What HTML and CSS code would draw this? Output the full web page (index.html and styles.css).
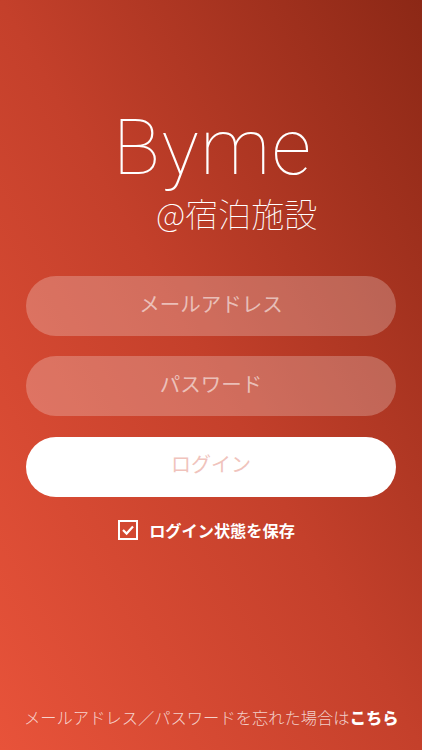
FILE: index.html
```html
<!DOCTYPE html>
<html lang="ja">
<head>
  <meta charset="UTF-8" />
  <meta name="viewport" content="width=device-width, initial-scale=1.0"/>
  <title>Byme ログイン</title>
  <link rel="stylesheet" href="styles.css">
</head>
<body>
  <div class="screen">
    <div class="logo">
      <div class="logo-name">Byme</div>
      <div class="logo-sub">@宿泊施設</div>
    </div>

    <form class="login-form">
      <input class="field" type="text" placeholder="メールアドレス" />
      <input class="field" type="password" placeholder="パスワード" />
      <button class="login-btn" type="button">ログイン</button>
      <label class="remember">
        <svg class="check" width="20" height="20" viewBox="0 0 20 20">
          <rect x="1" y="1" width="18" height="18" fill="none" stroke="#fff" stroke-width="2"/>
          <path d="M5 10 L8.6 13.6 L15 6.4" fill="none" stroke="#fff" stroke-width="2.2"/>
        </svg>
        <span>ログイン状態を保存</span>
      </label>
    </form>

    <div class="forgot">メールアドレス／パスワードを忘れた場合は<b>こちら</b></div>
  </div>
</body>
</html>
```

FILE: styles.css
```css
* {
  box-sizing: border-box;
}
html, body {
  margin: 0;
  height: 100%;
}
body {
  font-family: "Noto Sans CJK JP", "Noto Sans", sans-serif;
  color: white;
}
.screen {
  display: flex;
  flex-direction: column;
  height: 750px;
  padding: 0 26px;
  background: linear-gradient(to top right, #e8533a 0%, #c4402b 50%, #8c2816 100%);
  overflow: hidden;
}
.logo {
  display: flex;
  flex-direction: column;
  height: 276px;
  padding-top: 100px;
  padding-left: 87px;
}
.logo-name {
  font-family: Roboto, sans-serif;
  font-weight: 100;
  font-size: 78px;
  letter-spacing: 1.5px;
  line-height: 96px;
}
.logo-sub {
  margin-top: -3px;
  margin-left: 43px;
  font-weight: 100;
  font-size: 33px;
  line-height: 40px;
  white-space: nowrap;
}
.login-form {
  display: flex;
  flex-direction: column;
  gap: 20px;
}
.field, .login-btn {
  width: 100%;
  height: 60px;
  border: none;
  border-radius: 30px;
  padding: 0 0 7px;
  font-family: inherit;
  font-size: 20.5px;
  font-weight: 400;
  text-align: center;
}
.field {
  background: rgba(255,255,255,0.24);
  color: white;
  outline: none;
}
.field::placeholder {
  color: rgba(255,255,255,0.58);
  opacity: 1;
}
.login-btn {
  margin-top: 1px;
  background: white;
  color: #f0c3bc;
  font-size: 20px;
}
.remember {
  display: flex;
  justify-content: center;
  align-items: center;
  gap: 11px;
  margin-top: 1px;
  margin-right: 9px;
  font-size: 16.2px;
  font-weight: 700;
}
.forgot {
  margin-top: auto;
  margin-bottom: 21px;
  margin-left: -2px;
  font-size: 16.3px;
  font-weight: 300;
  line-height: 24px;
  color: rgba(255,255,255,0.75);
  white-space: nowrap;
}
.forgot b {
  color: white;
  font-weight: 900;
}
```
